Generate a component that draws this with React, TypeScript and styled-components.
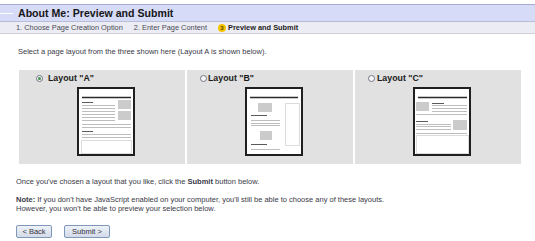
import React from 'react';
import styled, { createGlobalStyle } from 'styled-components';

const GlobalStyle = createGlobalStyle`
  html, body {
    margin: 0;
    padding: 0;
    background: #ffffff;
    font-family: "Liberation Sans", Arial, sans-serif;
  }
`;

const Page = styled.div`
  width: 535px;
  height: 241px;
  overflow: hidden;
  padding-top: 4px;
  box-sizing: border-box;
`;

const TitleBar = styled.div`
  display: flex;
  align-items: center;
  gap: 5px;
  height: 16px;
  background: #d6dbf8;
  border-top: 1px solid #a7acd3;
`;

const Dash = styled.span`
  width: 13px;
  height: 1px;
  background: #ffffff;
`;

const Title = styled.h1`
  margin: 0;
  font-size: 10.6px;
  font-weight: bold;
  color: #161616;
  line-height: 16px;
`;

const Steps = styled.div`
  display: flex;
  align-items: center;
  height: 11px;
  padding-left: 16px;
  background: #ececf4;
  border-top: 1px solid #b9bcd6;
  border-bottom: 1px solid #cfcfd8;
  font-size: 7.4px;
  color: #4a4a55;
`;

const Step = styled.span<{ $current?: boolean }>`
  display: flex;
  align-items: center;
  gap: 2px;
  margin-right: 11px;
  font-weight: ${(p) => (p.$current ? 'bold' : 'normal')};
  color: ${(p) => (p.$current ? '#1e1e1e' : '#4a4a55')};
`;

const StepBadge = styled.span`
  display: inline-flex;
  align-items: center;
  justify-content: center;
  width: 8px;
  height: 8px;
  border-radius: 50%;
  background: #f5c400;
  color: #5a4300;
  font-size: 6px;
  font-weight: bold;
`;

const Content = styled.div`
  padding-left: 16px;
  color: #3a3947;
  font-size: 7.5px;
  line-height: 9px;
`;

const Intro = styled.p`
  margin: 13px 0 0 2px;
`;

const Layouts = styled.div`
  display: grid;
  grid-template-columns: repeat(3, 166px);
  gap: 2px;
  width: 502px;
  margin: 14px 0 0 3px;
`;

const Panel = styled.div`
  display: flex;
  flex-direction: column;
  height: 94px;
  padding: 3px 0 8px;
  box-sizing: border-box;
  background: #e1e1e1;
`;

const Choice = styled.label<{ $indent: number; $gap: number }>`
  display: flex;
  align-items: center;
  gap: ${(p) => p.$gap}px;
  padding-left: ${(p) => p.$indent}px;
  height: 11px;
  font-size: 8.8px;
  font-weight: bold;
  color: #1a1a1a;
`;

const Radio = styled.span<{ $checked?: boolean }>`
  display: inline-flex;
  align-items: center;
  justify-content: center;
  width: 7px;
  height: 7px;
  box-sizing: border-box;
  border: 1px solid #6f7585;
  border-radius: 50%;
  background: #f6f6f6;

  &::after {
    content: '';
    width: 3px;
    height: 3px;
    border-radius: 50%;
    background: ${(p) => (p.$checked ? '#3f8f4f' : 'transparent')};
  }
`;

const ThumbWrap = styled.div`
  display: flex;
  justify-content: center;
  padding-left: 8px;
  margin-top: 3px;
`;

const Line = styled.p<{ $top: number }>`
  margin: ${(p) => p.$top}px 0 0;
`;

const Buttons = styled.div`
  display: flex;
  gap: 12px;
  margin-top: 12px;
`;

const Button = styled.button<{ $w: number }>`
  width: ${(p) => p.$w}px;
  height: 13px;
  padding: 0;
  border: 1px solid #7f97b8;
  border-radius: 2px;
  background: linear-gradient(#eef2f8, #d3dbe8);
  font-family: "Liberation Sans", Arial, sans-serif;
  font-size: 7.5px;
  color: #333344;
  line-height: 11px;
`;

type Part =
  | ['h' | 'd' | 'g', number, number, number]
  | ['b' | 'o', number, number, number, number];

const thumbs: Record<string, Part[]> = {
  A: [
    ['h', 10, 5, 54],
    ['d', 15, 5, 16],
    ['g', 18, 5, 38], ['g', 21, 5, 38], ['g', 24, 5, 38],
    ['g', 27, 5, 38], ['g', 30, 5, 38], ['g', 33, 5, 38],
    ['b', 41, 13, 13, 9], ['b', 41, 24, 13, 9],
    ['g', 37, 5, 54], ['g', 40, 5, 54],
    ['d', 44, 5, 16],
    ['g', 47, 5, 54], ['g', 50, 5, 54],
    ['o', 4, 53, 50, 13],
  ],
  B: [
    ['h', 10, 5, 53],
    ['b', 13, 16, 14, 9],
    ['d', 28, 6, 22],
    ['g', 33, 6, 35], ['g', 36, 6, 35], ['g', 38, 6, 35],
    ['b', 15, 44, 12, 9],
    ['d', 57, 6, 22],
    ['g', 62, 6, 35],
    ['o', 40, 16, 14, 42],
  ],
  C: [
    ['h', 10, 5, 54],
    ['b', 3, 15, 13, 9],
    ['d', 16, 19, 31],
    ['g', 18, 19, 54], ['g', 21, 19, 54], ['g', 24, 19, 54],
    ['g', 27, 3, 54],
    ['d', 34, 3, 15],
    ['g', 37, 3, 38], ['g', 39, 3, 38], ['g', 42, 3, 38],
    ['b', 40, 33, 14, 10],
    ['g', 46, 3, 54],
    ['o', 3, 48, 52, 18],
  ],
};

const Thumb: React.FC<{ parts: Part[] }> = ({ parts }) => (
  <svg width="58" height="69" viewBox="0 0 58 69">
    <rect x="1" y="1" width="56" height="67" fill="#ffffff" stroke="#1f1f1f" strokeWidth="2" />
    {parts.map((p, i) => {
      if (p[0] === 'b') {
        return <rect key={i} x={p[1]} y={p[2]} width={p[3]} height={p[4]} fill="#cbcbcb" />;
      }
      if (p[0] === 'o') {
        return (
          <rect key={i} x={p[1] + 0.5} y={p[2] + 0.5} width={p[3]} height={p[4]} fill="none" stroke="#dcdcdc" />
        );
      }
      const [kind, y, x1, x2] = p;
      const color = kind === 'h' ? '#2a2a2a' : kind === 'd' ? '#5a5a5a' : '#bdbdbd';
      const width = kind === 'h' ? 1.6 : 1;
      return <line key={i} x1={x1} x2={x2} y1={y + 0.5} y2={y + 0.5} stroke={color} strokeWidth={width} />;
    })}
  </svg>
);

const layouts = [
  { id: 'A', indent: 17, gap: 5, checked: true },
  { id: 'B', indent: 13, gap: 1, checked: false },
  { id: 'C', indent: 13, gap: 2, checked: false },
];

const App: React.FC = () => (
  <>
    <GlobalStyle />
    <Page>
      <TitleBar>
        <Dash />
        <Title>About Me: Preview and Submit</Title>
      </TitleBar>
      <Steps>
        <Step>1. Choose Page Creation Option</Step>
        <Step>2. Enter Page Content</Step>
        <Step $current>
          <StepBadge>3</StepBadge>
          Preview and Submit
        </Step>
      </Steps>
      <Content>
        <Intro>Select a page layout from the three shown here (Layout A is shown below).</Intro>
        <Layouts>
          {layouts.map((l) => (
            <Panel key={l.id}>
              <Choice $indent={l.indent} $gap={l.gap}>
                <Radio $checked={l.checked} />
                Layout "{l.id}"
              </Choice>
              <ThumbWrap>
                <Thumb parts={thumbs[l.id]} />
              </ThumbWrap>
            </Panel>
          ))}
        </Layouts>
        <Line $top={13}>
          Once you've chosen a layout that you like, click the <b>Submit</b> button below.
        </Line>
        <Line $top={9}>
          <b>Note:</b> If you don't have JavaScript enabled on your computer, you'll still be able to choose any of these layouts.
          <br />
          However, you won't be able to preview your selection below.
        </Line>
        <Buttons>
          <Button $w={36}>&lt; Back</Button>
          <Button $w={46}>Submit &gt;</Button>
        </Buttons>
      </Content>
    </Page>
  </>
);

export default App;
